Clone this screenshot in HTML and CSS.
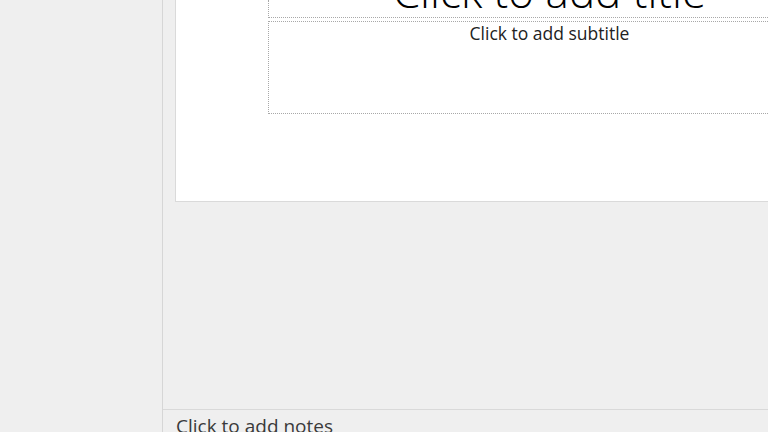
FILE: index.html
```html
<!DOCTYPE html>
<html>
<head>
<meta charset="utf-8">
<link rel="stylesheet" href="styles.css">
</head>
<body>
<div class="app">
  <aside class="thumbs"></aside>
  <main class="editor">
    <div class="stage">
      <div class="slide">
        <div class="title-box"><span class="title-text">Click to add title</span></div>
        <div class="subtitle-box"><span class="subtitle-text">Click to add subtitle</span></div>
      </div>
    </div>
    <div class="notes"><span class="notes-text">Click to add notes</span></div>
  </main>
</div>
</body>
</html>
```
FILE: styles.css
```css
html, body {
  margin: 0;
  padding: 0;
  width: 768px;
  height: 432px;
  overflow: hidden;
  background: #efefef;
  font-family: "Open Sans", "Noto Sans", sans-serif;
}
.app {
  display: flex;
  width: 768px;
  height: 432px;
}
.thumbs {
  width: 162px;
  flex: none;
  background: #efefef;
  border-right: 1px solid #d6d6d6;
}
.editor {
  flex: 1;
  display: flex;
  flex-direction: column;
  min-width: 0;
  overflow: hidden;
}
.stage {
  flex: 1;
  padding-left: 12px;
  overflow: hidden;
}
.slide {
  width: 700px;
  height: 202px;
  background: #fff;
  border-left: 1px solid #dadada;
  border-bottom: 1px solid #dadada;
  box-sizing: border-box;
  padding-left: 92px;
  display: flex;
  flex-direction: column;
}
.title-box {
  width: 562px;
  height: 18px;
  border-left: 1px dotted #a8a8a8;
  border-bottom: 1px dotted #a8a8a8;
  box-sizing: border-box;
  display: flex;
  justify-content: center;
  align-items: flex-end;
  overflow: visible;
}
.title-text {
  font-size: 44px;
  font-weight: 300;
  line-height: 44px;
  color: #000;
  margin-bottom: 4px;
  white-space: nowrap;
}
.subtitle-box {
  margin-top: 3px;
  width: 562px;
  height: 93px;
  border: 1px dotted #a8a8a8;
  border-right: none;
  box-sizing: border-box;
  text-align: center;
  padding-top: 0;
}
.subtitle-text {
  font-size: 17.5px;
  line-height: 22px;
  color: #222;
  white-space: nowrap;
}
.notes {
  height: 23px;
  border-top: 1px solid #d9d9d9;
  padding-left: 13px;
  padding-top: 4px;
  box-sizing: border-box;
  overflow: hidden;
}
.notes-text {
  font-size: 19px;
  line-height: 24px;
  color: #3a3a3a;
  white-space: nowrap;
}
```
